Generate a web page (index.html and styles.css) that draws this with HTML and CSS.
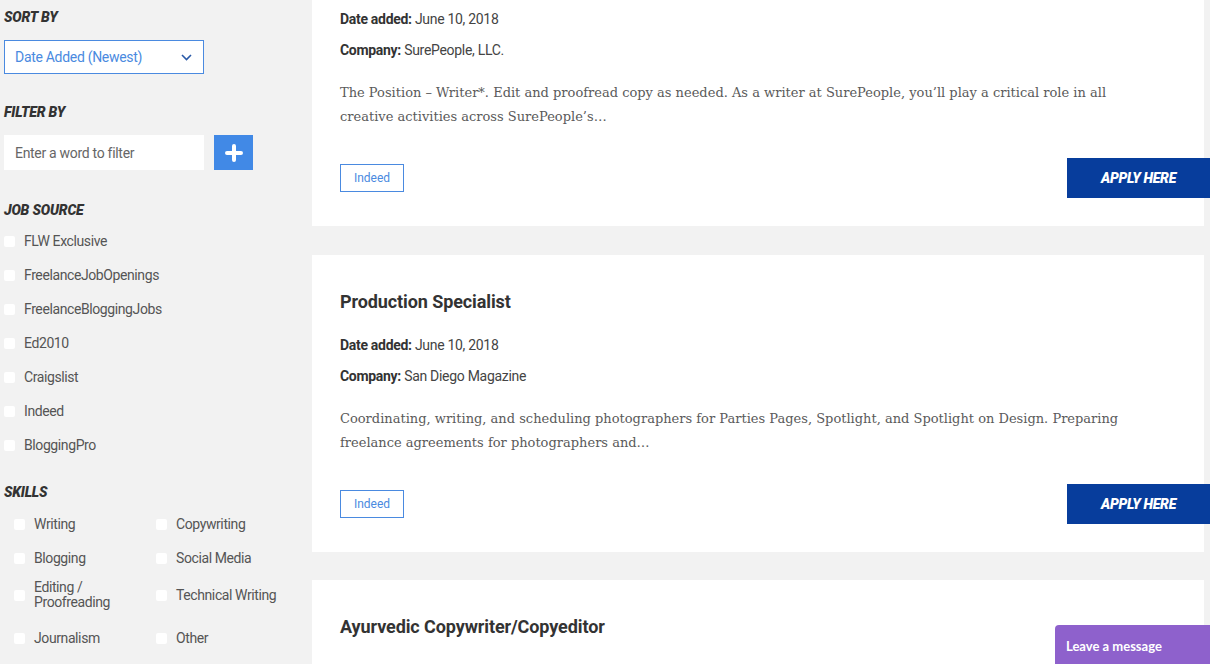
FILE: index.html
```html
<!doctype html>
<html>
  <head>
    <meta charset="UTF-8">
    <meta name="viewport" content="width=device-width, initial-scale=1.0">
    <title>Freelance Jobs</title>
    <link rel="stylesheet" href="styles.css">
  </head>
  <body>
    <div class="page">
      <aside class="sidebar">
        <h3 class="side-title">Sort by</h3>
        <div class="select">
          <span>Date Added (Newest)</span>
          <svg class="chevron" width="11" height="7" viewBox="0 0 11 7"><path d="M1 1l4.5 4.5L10 1" fill="none" stroke="#2a5aa8" stroke-width="1.6"/></svg>
        </div>

        <h3 class="side-title filter-title">Filter by</h3>
        <div class="filter-row">
          <div class="filter-input">Enter a word to filter</div>
          <button class="plus-button">
            <svg width="18" height="18" viewBox="0 0 18 18"><path d="M9 2v14M2 9h14" stroke="#fff" stroke-width="4" stroke-linecap="round"/></svg>
          </button>
        </div>

        <h3 class="side-title source-title">Job source</h3>
        <ul class="source-list">
          <li><span class="box"></span>FLW Exclusive</li>
          <li><span class="box"></span>FreelanceJobOpenings</li>
          <li><span class="box"></span>FreelanceBloggingJobs</li>
          <li><span class="box"></span>Ed2010</li>
          <li><span class="box"></span>Craigslist</li>
          <li><span class="box"></span>Indeed</li>
          <li><span class="box"></span>BloggingPro</li>
        </ul>

        <h3 class="side-title skills-title">Skills</h3>
        <ul class="skills-grid">
          <li><span class="box"></span>Writing</li>
          <li><span class="box"></span>Copywriting</li>
          <li><span class="box"></span>Blogging</li>
          <li><span class="box"></span>Social Media</li>
          <li class="tall"><span class="box"></span><span>Editing /<br>Proofreading</span></li>
          <li class="tall"><span class="box"></span>Technical Writing</li>
          <li><span class="box"></span>Journalism</li>
          <li><span class="box"></span>Other</li>
        </ul>
      </aside>

      <main class="jobs">
        <!-- first card is scrolled past its title -->
        <div class="job-card scrolled">
          <div class="meta"><b>Date added:</b> June 10, 2018</div>
          <div class="meta"><b>Company:</b> SurePeople, LLC.</div>
          <p class="desc">The Position – Writer*. Edit and proofread copy as needed. As a writer at SurePeople, you’ll play a critical role in all creative activities across SurePeople’s…</p>
          <div class="job-footer">
            <span class="tag">Indeed</span>
            <a class="apply" href="#">Apply here</a>
          </div>
        </div>

        <div class="job-card">
          <h2 class="job-title">Production Specialist</h2>
          <div class="meta"><b>Date added:</b> June 10, 2018</div>
          <div class="meta"><b>Company:</b> San Diego Magazine</div>
          <p class="desc">Coordinating, writing, and scheduling photographers for Parties Pages, Spotlight, and Spotlight on Design. Preparing freelance agreements for photographers and…</p>
          <div class="job-footer">
            <span class="tag">Indeed</span>
            <a class="apply" href="#">Apply here</a>
          </div>
        </div>

        <div class="job-card">
          <h2 class="job-title">Ayurvedic Copywriter/Copyeditor</h2>
        </div>
      </main>
    </div>

    <div class="chat-tab">Leave a message</div>
  </body>
</html>
```

FILE: styles.css
```css
* {
  margin: 0;
  padding: 0;
  box-sizing: border-box;
}

body {
  width: 1210px;
  height: 664px;
  overflow: hidden;
  background: #f2f2f2;
  font-family: Roboto, "Liberation Sans", Arial, sans-serif;
  color: #555;
}

.page {
  display: flex;
  align-items: flex-start;
}

/* Sidebar */
.sidebar {
  width: 312px;
  flex-shrink: 0;
  padding: 7px 0 0 4px;
}

.side-title {
  font-size: 14px;
  line-height: 20px;
  font-weight: 900;
  font-style: italic;
  text-transform: uppercase;
  color: #333;
  letter-spacing: -0.2px;
}

.select {
  margin-top: 13px;
  width: 200px;
  height: 34px;
  border: 1px solid #4a8ae0;
  background: #fff;
  display: flex;
  align-items: center;
  justify-content: space-between;
  padding: 0 11px 0 10px;
  font-size: 14px;
  color: #4a8ae0;
  letter-spacing: -0.3px;
}

.filter-title {
  margin-top: 28px;
}

.filter-row {
  margin-top: 13px;
  display: flex;
  gap: 10px;
}

.filter-input {
  width: 200px;
  height: 35px;
  background: #fff;
  display: flex;
  align-items: center;
  padding-left: 11px;
  font-size: 14px;
  color: #666;
  letter-spacing: -0.3px;
}

.plus-button {
  width: 39px;
  height: 35px;
  border: none;
  background: #4189e6;
  display: flex;
  align-items: center;
  justify-content: center;
}

.source-title {
  margin-top: 30px;
}

ul {
  list-style: none;
}

.source-list {
  margin-top: 4px;
}

.source-list li,
.skills-grid li {
  display: flex;
  align-items: center;
  height: 34px;
  font-size: 14px;
  color: #555;
  letter-spacing: -0.4px;
}

.box {
  width: 11px;
  height: 11px;
  background: #fff;
  border-radius: 2px;
  margin-right: 9px;
  flex-shrink: 0;
}

.skills-title {
  margin-top: 20px;
}

.skills-grid {
  margin-top: 5px;
  padding-left: 10px;
  display: grid;
  grid-template-columns: 142px 142px;
}

.skills-grid li.tall {
  height: 46px;
  line-height: 15px;
  padding-bottom: 6px;
}

/* Jobs */
.jobs {
  flex: 1;
  padding-right: 6px;
}

.job-card {
  background: #fff;
  padding: 35px 0 28px 28px;
  margin-bottom: 28px;
}

.job-card.scrolled {
  padding-top: 9px;
  margin-bottom: 29px;
}

.job-title {
  font-size: 18px;
  line-height: 24px;
  font-weight: 700;
  color: #333;
  letter-spacing: -0.1px;
  margin-bottom: 21px;
}

.meta {
  font-size: 14px;
  line-height: 20px;
  color: #444;
  letter-spacing: -0.3px;
  margin-bottom: 11px;
}

.meta b {
  color: #333;
}

.desc {
  margin-top: 21px;
  font-family: "DejaVu Serif", "Liberation Serif", serif;
  font-size: 13px;
  line-height: 24px;
  color: #5a5a5a;
  padding-right: 80px;
}

.job-footer {
  margin-top: 29px;
  display: flex;
  align-items: center;
  justify-content: space-between;
}

.tag {
  width: 64px;
  height: 28px;
  border: 1px solid #4a8ae0;
  display: flex;
  align-items: center;
  justify-content: center;
  font-size: 12px;
  color: #4a8ae0;
}

.apply {
  width: 143px;
  height: 40px;
  margin-right: -6px;
  background: #073d9c;
  color: #fff;
  text-decoration: none;
  text-transform: uppercase;
  font-size: 14px;
  font-weight: 900;
  font-style: italic;
  letter-spacing: -0.3px;
  display: flex;
  align-items: center;
  justify-content: center;
}

/* Chat widget */
.chat-tab {
  position: fixed;
  right: 0;
  bottom: 0;
  width: 155px;
  height: 39px;
  background: #8e61cc;
  border-top-left-radius: 4px;
  color: #fff;
  font-family: Lato, sans-serif;
  font-weight: 700;
  font-size: 13px;
  padding: 13px 0 0 11px;
}
```
